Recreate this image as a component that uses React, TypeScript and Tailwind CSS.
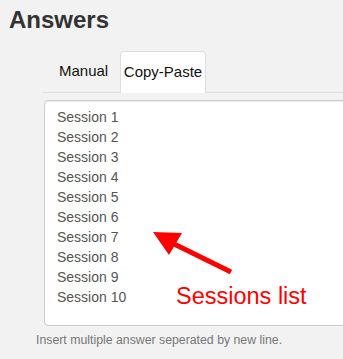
export default function App() {
  const sessions = Array.from({ length: 10 }, (_, i) => `Session ${i + 1}`);

  return (
    <div
      className="relative w-[343px] h-[359px] overflow-hidden bg-[#f2f2f2]"
      style={{ fontFamily: '"Liberation Sans", Arial, sans-serif' }}
    >
      {/* Heading */}
      <h1 className="pt-[7px] pl-[9px] text-[24px] leading-[26px] font-bold text-[#333]">
        Answers
      </h1>

      {/* Tabs */}
      <div className="mt-[18px] ml-[43px] flex border-b border-[#ddd]">
        <div className="w-[77px] h-[41px] pl-4 flex items-center text-[15px] text-[#111]">
          Manual
        </div>
        <div className="w-[86px] h-[42px] -mb-px flex items-center justify-center bg-white border border-b-0 border-[#ddd] rounded-t-[4px] text-[15px] text-[#111]">
          Copy-Paste
        </div>
      </div>

      {/* Textarea */}
      <div className="mt-[7px] ml-[44px] w-[320px] h-[226px] bg-white border border-[#ccc] rounded-[4px] shadow-[inset_0_1px_1px_rgba(0,0,0,0.075)] pt-[6px] pl-3 text-[14px] leading-[20px] text-[#555]">
        {sessions.map((s) => (
          <div key={s}>{s}</div>
        ))}
      </div>

      {/* Help text */}
      <p className="mt-[6px] ml-[36px] text-[12.3px] leading-[17px] text-[#777]">
        Insert multiple answer seperated by new line.
      </p>

      {/* Annotation */}
      <svg
        className="absolute left-[150px] top-[228px]"
        width="85"
        height="48"
        viewBox="0 0 85 48"
      >
        <line x1="16" y1="12" x2="81" y2="44" stroke="#f00" strokeWidth="5" />
        <polygon points="3,4 32,5 19,27" fill="#f00" />
      </svg>
      <span className="absolute left-[176px] top-[284px] text-[23.5px] leading-[24px] text-[#f00]">
        Sessions list
      </span>
    </div>
  );
}
